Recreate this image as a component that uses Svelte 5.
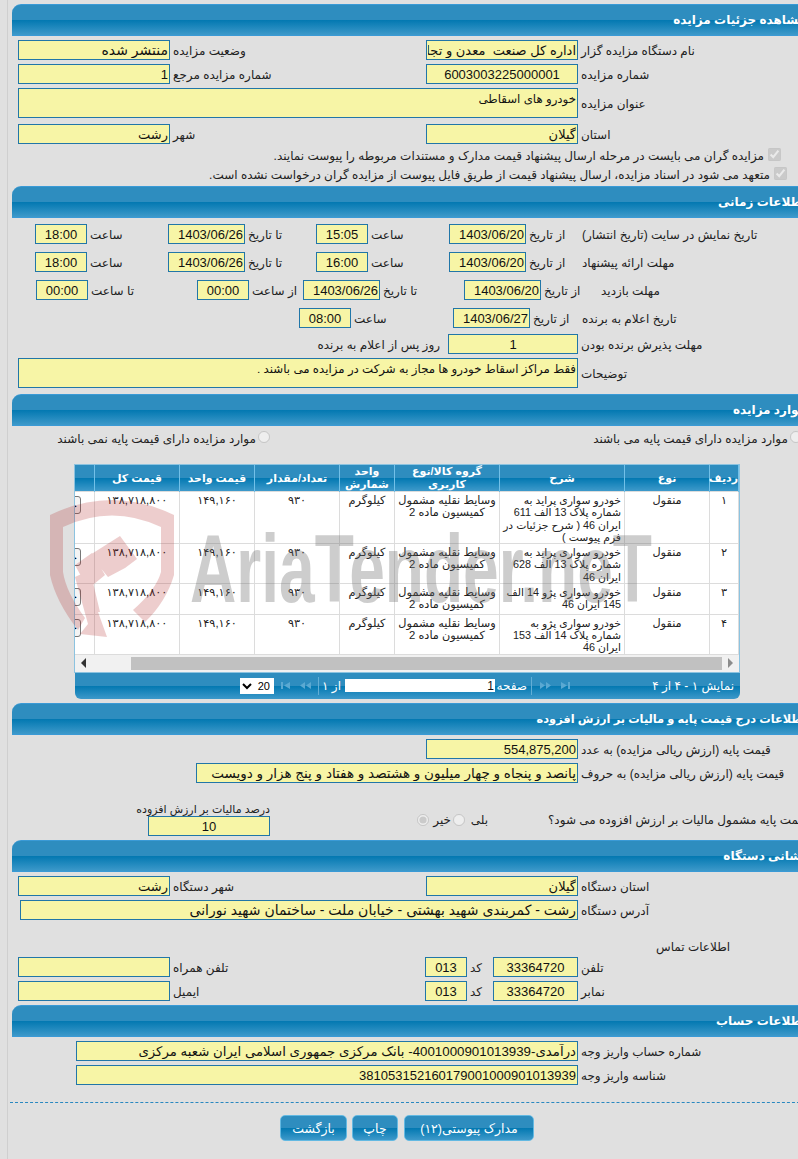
<script>
  const items = [
    { n: '۱', lines: ['خودرو سواری پراید به', 'شماره پلاک 13 الف 611', 'ایران 46 ( شرح جزئیات در', 'فرم پیوست )'] },
    { n: '۲', lines: ['خودرو سواری پراید به', 'شماره پلاک 13 الف 628', 'ایران 46'] },
    { n: '۳', lines: ['خودرو سواری پژو 14 الف', '145 ایران 46'] },
    { n: '۴', lines: ['خودرو سواری پژو به', 'شماره پلاک 14 الف 153', 'ایران 46'] },
  ];
  const heads = ['ردیف', 'نوع', 'شرح', 'گروه کالا/نوع کاربری', 'واحد شمارش', 'تعداد/مقدار', 'قیمت واحد', 'قیمت کل', 'مدارک'];
  const colNames = ['c-n', 'c-type', 'c-desc', 'c-group', 'c-unit', 'c-qty', 'c-price', 'c-total', 'c-act'];
</script>

<div class="page">
  <div class="wrap">
    <section>
      <h2>مشاهده جزئیات مزایده</h2>
      <div class="body b1">
        <div class="row two">
          <span class="lbl">نام دستگاه مزایده گزار</span>
          <input readonly value="اداره کل صنعت  معدن و تجارت" />
          <span class="lbl">وضعیت مزایده</span>
          <input class="big" readonly value="منتشر شده" />
        </div>
        <div class="row two">
          <span class="lbl">شماره مزایده</span>
          <input class="mid" readonly value="6003003225000001" />
          <span class="lbl">شماره مزایده مرجع</span>
          <input readonly value="1" />
        </div>
        <div class="row wide-area">
          <span class="lbl">عنوان مزایده</span>
          <textarea readonly>خودرو های اسقاطی</textarea>
        </div>
        <div class="row two after-area">
          <span class="lbl">استان</span>
          <input readonly value="گیلان" />
          <span class="lbl">شهر</span>
          <input readonly value="رشت" />
        </div>
        <label class="check c1"><input type="checkbox" checked disabled /><span>مزایده گران می بایست در مرحله ارسال پیشنهاد قیمت مدارک و مستندات مربوطه را پیوست نمایند.</span></label>
        <label class="check c2"><input type="checkbox" checked disabled /><span>متعهد می شود در اسناد مزایده، ارسال پیشنهاد قیمت از طریق فایل پیوست از مزایده گران درخواست نشده است.</span></label>
      </div>
    </section>

    <section>
      <h2>اطلاعات زمانی</h2>
      <div class="body b2">
        <div class="row t1">
          <span class="lbl">تاریخ نمایش در سایت (تاریخ انتشار)</span>
          <span class="lbl">از تاریخ</span>
          <input readonly value="1403/06/20" />
          <span class="lbl">ساعت</span>
          <input class="mid" readonly value="15:05" />
          <span class="lbl">تا تاریخ</span>
          <input readonly value="1403/06/26" />
          <span class="lbl">ساعت</span>
          <input class="mid" readonly value="18:00" />
        </div>
        <div class="row t1">
          <span class="lbl">مهلت ارائه پیشنهاد</span>
          <span class="lbl">از تاریخ</span>
          <input readonly value="1403/06/20" />
          <span class="lbl">ساعت</span>
          <input class="mid" readonly value="16:00" />
          <span class="lbl">تا تاریخ</span>
          <input readonly value="1403/06/26" />
          <span class="lbl">ساعت</span>
          <input class="mid" readonly value="18:00" />
        </div>
        <div class="row t3">
          <span class="lbl">مهلت بازدید</span>
          <span class="lbl">از تاریخ</span>
          <input readonly value="1403/06/20" />
          <span class="lbl">تا تاریخ</span>
          <input readonly value="1403/06/26" />
          <span class="lbl">از ساعت</span>
          <input class="mid" readonly value="00:00" />
          <span class="lbl">تا ساعت</span>
          <input class="mid" readonly value="00:00" />
        </div>
        <div class="row t4">
          <span class="lbl">تاریخ اعلام به برنده</span>
          <span class="lbl">از تاریخ</span>
          <input readonly value="1403/06/27" />
          <span class="lbl">ساعت</span>
          <input class="mid" readonly value="08:00" />
        </div>
        <div class="row t5">
          <span class="lbl">مهلت پذیرش برنده بودن</span>
          <input class="mid" readonly value="1" />
          <span class="after">روز پس از اعلام به برنده</span>
        </div>
        <div class="row wide-area t6">
          <span class="lbl">توضیحات</span>
          <textarea readonly>فقط مراکز اسقاط خودرو ها مجاز به شرکت در مزایده می باشند .</textarea>
        </div>
      </div>
    </section>

    <section>
      <h2>موارد مزایده</h2>
      <div class="body b3">
        <div class="radios">
          <label class="opt first"><input type="radio" disabled /><span>موارد مزایده دارای قیمت پایه می باشند</span></label>
          <label class="opt"><input type="radio" disabled /><span>موارد مزایده دارای قیمت پایه نمی باشند</span></label>
        </div>
        <div class="grid-box">
          <div class="table-clip">
            <table>
              <colgroup>
                {#each colNames as c}<col class={c} />{/each}
              </colgroup>
              <thead>
                <tr>{#each heads as h}<th>{h}</th>{/each}</tr>
              </thead>
              <tbody>
                {#each items as item}
                  <tr>
                    <td>{item.n}</td>
                    <td>منقول</td>
                    <td class="desc">{#each item.lines as line}<div>{line}</div>{/each}</td>
                    <td>وسایط نقلیه مشمول<br />کمیسیون ماده 2</td>
                    <td>کیلوگرم</td>
                    <td>۹۳۰</td>
                    <td>۱۴۹,۱۶۰</td>
                    <td>۱۳۸,۷۱۸,۸۰۰</td>
                    <td class="act"><button>جزئیات</button></td>
                  </tr>
                {/each}
              </tbody>
            </table>
          </div>
          <div class="hscroll">
            <span class="arrow"><svg width="7" height="10" viewBox="0 0 7 10"><path d="M1 0v10l5-5z" fill="#8c8c8c" /></svg></span>
            <div class="track"><div class="thumb"></div></div>
            <span class="arrow"><svg width="7" height="10" viewBox="0 0 7 10"><path d="M6 0v10L1 5z" fill="#333" /></svg></span>
          </div>
        </div>
        <div class="pager">
          <span class="status">نمایش ۱ - ۴ از ۴</span>
          <svg class="ic i1" width="9" height="7" viewBox="0 0 9 7"><path d="M0 0l6 3.5L0 7zM7 0h2v7H7z" /></svg>
          <svg class="ic i2" width="11" height="7" viewBox="0 0 11 7"><path d="M0 0l5 3.5L0 7zM6 0l5 3.5L6 7z" /></svg>
          <span class="sep s1"></span>
          <span class="word">صفحه</span>
          <input class="page-no" readonly value="1" />
          <span class="word of">از ۱</span>
          <span class="sep s2"></span>
          <svg class="ic i3" width="11" height="7" viewBox="0 0 11 7"><path d="M5 0v7L0 3.5zM11 0v7L6 3.5z" /></svg>
          <svg class="ic i4" width="10" height="7" viewBox="0 0 10 7"><path d="M0 0h2v7H0zM9 0v7L3 3.5z" /></svg>
          <select class="size"><option>20</option></select>
        </div>
      </div>
    </section>

    <section>
      <h2 class="tight">اطلاعات درج قیمت پایه و مالیات بر ارزش افزوده</h2>
      <div class="body b4">
        <div class="row wide-one">
          <span class="lbl">قیمت پایه (ارزش ریالی مزایده) به عدد</span>
          <input readonly value="554,875,200" />
        </div>
        <div class="row wide-words">
          <span class="lbl">قیمت پایه (ارزش ریالی مزایده) به حروف</span>
          <input class="words" readonly value="پانصد و پنجاه و چهار میلیون و هشتصد و هفتاد و پنج هزار و دویست" />
        </div>
        <div class="vat">
          <div class="vat-q">
            <span class="lbl q">قیمت پایه مشمول مالیات بر ارزش افزوده می شود؟</span>
            <span class="yes">بلی</span>
            <input type="radio" disabled />
            <span class="no">خیر</span>
            <input type="radio" checked disabled />
          </div>
          <div class="vat-pct">
            <span>درصد مالیات بر ارزش افزوده</span>
            <input class="mid" readonly value="10" />
          </div>
        </div>
      </div>
    </section>

    <section>
      <h2>نشانی دستگاه</h2>
      <div class="body b5">
        <div class="row two">
          <span class="lbl">استان دستگاه</span>
          <input readonly value="گیلان" />
          <span class="lbl">شهر دستگاه</span>
          <input readonly value="رشت" />
        </div>
        <div class="row address">
          <span class="lbl">آدرس دستگاه</span>
          <input class="big" readonly value="رشت - کمربندی شهید بهشتی - خیابان ملت - ساختمان شهید نورانی" />
        </div>
        <div class="contact-title"><span class="lbl">اطلاعات تماس</span></div>
        <div class="row phone">
          <span class="lbl">تلفن</span>
          <input class="mid" readonly value="33364720" />
          <span class="lbl">کد</span>
          <input class="mid" readonly value="013" />
          <span class="lbl">تلفن همراه</span>
          <input readonly value="" />
        </div>
        <div class="row phone">
          <span class="lbl">نمابر</span>
          <input class="mid" readonly value="33364720" />
          <span class="lbl">کد</span>
          <input class="mid" readonly value="013" />
          <span class="lbl">ایمیل</span>
          <input readonly value="" />
        </div>
      </div>
    </section>

    <section>
      <h2>اطلاعات حساب</h2>
      <div class="body b6">
        <div class="row account">
          <span class="lbl">شماره حساب واریز وجه</span>
          <input class="bank" readonly value="درآمدی-4001000901013939- بانک مرکزی جمهوری اسلامی ایران شعبه مرکزی" />
        </div>
        <div class="row account">
          <span class="lbl">شناسه واریز وجه</span>
          <input readonly value="381053152160179001000901013939" />
        </div>
      </div>
    </section>

    <div class="dash"></div>

    <div class="actions">
      <button class="btn docs">مدارک پیوستی(۱۲)</button>
      <button class="btn print">چاپ</button>
      <button class="btn back">بازگشت</button>
    </div>
  </div>

  <!-- watermark sits over the table like the site's background logo -->
  <svg class="mark" width="660" height="160" viewBox="40 490 660 160" aria-hidden="true">
    <g opacity=".22" fill="#b02020">
      <path d="M50 515Q112 485 174 515V575Q166 602 145 622L133 610Q156 590 161 572V527Q112 504 63 527V572Q66 592 85 618L78 630Q56 602 50 575z" />
      <path d="M75 577L90 570 100 612 98 612 107 637 80 634 88 624z" />
      <path d="M90 555L120 536 137 559 125 568 108 577zM75 565L92 553 105 575 88 589z" />
    </g>
    <text x="190" y="602" font-family="Liberation Sans" font-weight="700" font-size="96" textLength="462" lengthAdjust="spacingAndGlyphs" fill="#666" fill-opacity=".33">AriaTender.neT</text>
  </svg>
</div>

<style>
  :global(body) {
    margin: 0;
    background: #e0e0e0;
  }

  .page {
    position: relative;
    width: 798px;
    height: 1159px;
    overflow: hidden;
    background: #e0e0e0;
    font-family: 'Liberation Sans', 'DejaVu Sans', sans-serif;
    font-size: 12px;
    color: #222;
  }

  .wrap {
    box-sizing: border-box;
    width: 803px;
    height: 1159px;
    margin-left: 7px;
    padding: 4px 0 0 4px;
    border-left: 1px solid #cfcfcf;
    direction: rtl;
  }

  h2 {
    box-sizing: border-box;
    height: 32px;
    margin: 0;
    padding-right: 4px;
    border-top: 1px solid #3a9ad6;
    border-bottom: 1px solid #3a9ad6;
    border-top-left-radius: 9px;
    background: linear-gradient(#2e8dbf 0, #2e8dbf 15px, #0278b1 15px, #3d99ca 100%);
    color: #fff;
    font-size: 12px;
    font-weight: 700;
    line-height: 30px;
    white-space: nowrap;
  }

  h2.tight { font-size: 11.4px; }

  .row {
    display: grid;
    height: 20px;
    margin-bottom: 4px;
  }

  .two { grid-template-columns: 232px 152px 256px 152px; }
  .wide-area { grid-template-columns: 232px 560px; height: 30px; }
  .after-area { margin-top: 6px; }
  .t1 { grid-template-columns: 231px 53px 77px 81px 52px 71px 77px 81px 52px; margin-bottom: 8px; }
  .t3 { grid-template-columns: 212px 57px 77px 84px 77px 54px 52px 109px 52px; margin-bottom: 8px; }
  .t4 { grid-template-columns: 231px 49px 77px 102px 52px; margin-bottom: 6px; }
  .t5 { grid-template-columns: 232px 130px 1fr; }
  .wide-one { grid-template-columns: 232px 152px; }
  .wide-words { grid-template-columns: 232px 382px; }
  .address { grid-template-columns: 232px 558px; }
  .phone { grid-template-columns: 232px 85px 26px 42px 255px 152px; }
  .account { grid-template-columns: 232px 502px; }

  .lbl {
    display: flex;
    justify-content: flex-end;
    align-items: center;
    padding: 2px 3px 0;
    white-space: nowrap;
  }

  .after {
    display: flex;
    align-items: center;
    padding: 2px 8px 0 0;
    white-space: nowrap;
  }

  input:not([type]),
  textarea {
    box-sizing: border-box;
    display: block;
    width: 100%;
    height: 100%;
    margin: 0;
    padding: 0 1px;
    border: 1px solid #2176a8;
    border-radius: 0;
    outline: none;
    background: #f7f5a6;
    color: #111;
    font-family: inherit;
    font-size: 13px;
    direction: rtl;
    resize: none;
    overflow: hidden;
  }

  textarea {
    padding-top: 3px;
    font-size: 11.8px;
    line-height: 14px;
  }

  input.mid { text-align: center; }
  input.big { font-size: 14px; }
  input.words { font-size: 13.5px; }
  input.bank { font-size: 13.3px; }

  .body {
    box-sizing: border-box;
    padding-top: 4px;
  }

  .b1 { height: 150px; }
  .b2 { height: 176px; padding-top: 6px; }
  .b3 { height: 277px; padding-top: 5px; }
  .b4 { height: 105px; }
  .b5 { height: 133px; }
  .b6 { height: 65px; }

  .check {
    display: flex;
    align-items: flex-start;
    gap: 4px;
    height: 19px;
    white-space: nowrap;
  }

  .check input {
    width: 13px;
    height: 13px;
    margin: 0;
    flex: none;
  }

  .check span { padding-top: 1px; }
  .c1 { padding-right: 29px; }
  .c2 { padding-right: 23px; }

  .radios {
    display: flex;
    height: 33px;
    padding-right: 8px;
  }

  .opt {
    display: flex;
    align-items: flex-start;
    gap: 2px;
    white-space: nowrap;
  }

  .opt span { padding-top: 1px; }
  .opt.first { width: 532px; flex: none; }

  input[type='radio'] {
    width: 12px;
    height: 12px;
    margin: 0;
    flex: none;
  }

  .grid-box {
    box-sizing: border-box;
    width: 666px;
    margin-right: 70px;
    border: 1px solid #8cc3e0;
    background: #fff;
  }

  .table-clip { overflow: hidden; }

  table {
    width: 744px;
    table-layout: fixed;
    border-collapse: collapse;
    font-size: 11.3px;
  }

  .c-n { width: 29px; }
  .c-type { width: 85px; }
  .c-desc { width: 125px; }
  .c-group { width: 105px; }
  .c-unit { width: 55px; }
  .c-qty { width: 85px; }
  .c-price { width: 75px; }
  .c-total { width: 85px; }
  .c-act { width: 100px; }

  th {
    height: 26px;
    padding: 0;
    border-right: 1px solid #72c0e8;
    border-left: 1px solid #72c0e8;
    background: linear-gradient(#2e8dbf 0, #2e8dbf 13px, #0278b1 13px, #3d99ca 100%);
    color: #fff;
    font-size: 11px;
    font-weight: 700;
    line-height: 13px;
  }

  td {
    height: 26px;
    padding: 2px 0 0;
    border: 1px solid #dcdcdc;
    text-align: center;
    vertical-align: top;
    line-height: 12.25px;
    white-space: nowrap;
  }

  td.desc {
    padding-right: 3px;
    font-size: 10.8px;
    text-align: right;
  }

  td.act {
    padding: 4px 13px 0 0;
    text-align: right;
  }

  td.act button {
    width: 60px;
    height: 18px;
    padding: 0 3px 0 0;
    border: 1px solid #777;
    border-radius: 3px;
    background: #f4f4f4;
    font-family: inherit;
    font-size: 11px;
    text-align: right;
  }

  .hscroll {
    display: flex;
    height: 17px;
    background: #f1f1f1;
  }

  .arrow {
    display: flex;
    flex: none;
    width: 17px;
    align-items: center;
    justify-content: center;
  }

  .track {
    flex: 1;
    display: flex;
    align-items: center;
  }

  .thumb {
    width: 591px;
    height: 13px;
    background: #c1c1c1;
  }

  .pager {
    box-sizing: border-box;
    display: flex;
    align-items: center;
    width: 665px;
    height: 26px;
    margin-right: 70px;
    padding-right: 6px;
    border-radius: 0 0 6px 6px;
    background: linear-gradient(#2e8dbf 0, #2e8dbf 13px, #0278b1 13px, #3d99ca 100%);
    color: #fff;
    font-size: 12px;
    white-space: nowrap;
  }

  .status { flex: none; width: 76px; }
  .ic { flex: none; fill: #5aa9d2; }
  .i1 { margin-right: 88px; }
  .i2 { margin-right: 10px; }
  .i3 { margin-right: 7px; }
  .i4 { margin-right: 9px; }

  .sep {
    flex: none;
    width: 1px;
    height: 18px;
    background: #62aed6;
  }

  .s1 { margin-right: 8px; }
  .s2 { margin-right: 5px; }

  .word {
    flex: none;
    width: 28px;
    margin-right: 4px;
  }

  .word.of { width: 17px; }

  input.page-no {
    flex: none;
    width: 150px;
    height: 13px;
    margin-right: 4px;
    border: 0;
    background: #fff;
    font-size: 12px;
  }

  .size {
    flex: none;
    width: 34px;
    height: 16px;
    margin-right: 7px;
    padding: 0;
    border: 0;
    border-radius: 0;
    background: #fff;
    font-family: inherit;
    font-size: 11px;
  }

  .vat {
    display: flex;
    align-items: flex-end;
    margin-top: 20px;
  }

  .vat-q {
    display: flex;
    align-items: center;
    flex: none;
    width: 540px;
    height: 20px;
    margin-bottom: 6px;
  }

  .lbl.q {
    flex: none;
    width: 262px;
    box-sizing: border-box;
    padding: 0;
  }

  .yes {
    flex: none;
    width: 19px;
    margin-right: 60px;
  }

  .no {
    flex: none;
    width: 18px;
    margin-right: 2px;
  }

  .vat-q input { margin-right: 4px; }

  .vat-pct {
    display: flex;
    flex-direction: column;
    flex: none;
    width: 122px;
    white-space: nowrap;
  }

  .vat-pct span {
    height: 13px;
    font-size: 11px;
    line-height: 13px;
  }

  .vat-pct input { height: 20px; }

  .contact-title {
    display: flex;
    width: 154px;
    height: 18px;
    margin: 18px 0 1px;
  }

  .contact-title .lbl { flex: 1; padding: 0; }

  .dash {
    margin-left: -2px;
    border-top: 1px dashed #2a88c0;
  }

  .actions {
    display: flex;
    margin-top: 12px;
    padding-right: 276px;
  }

  .btn {
    box-sizing: border-box;
    flex: none;
    height: 26px;
    padding: 0;
    border: 1px solid #63b9e2;
    border-radius: 5px;
    background: linear-gradient(#2e8dbf 0, #2e8dbf 12px, #0278b1 12px, #3d99ca 100%);
    color: #fff;
    font-family: inherit;
    font-size: 12.5px;
  }

  .docs { width: 130px; }
  .print { width: 46px; margin-right: 6px; }
  .back { width: 67px; margin-right: 5px; }

  .mark {
    position: absolute;
    left: 40px;
    top: 490px;
    pointer-events: none;
  }
</style>
